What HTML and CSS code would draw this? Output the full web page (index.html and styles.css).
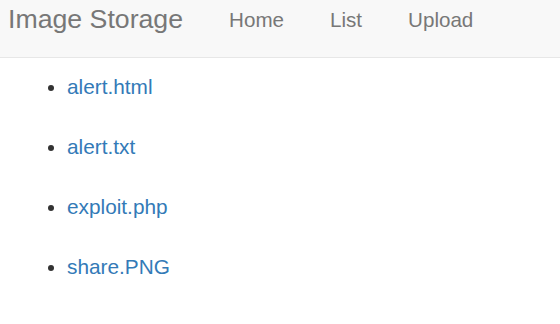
FILE: index.html
```html
<!DOCTYPE html>
<html lang="en">
<head>
  <meta charset="UTF-8">
  <title>Image Storage</title>
  <link rel="stylesheet" href="styles.css">
</head>
<body>
  <nav class="navbar">
    <a class="brand" href="#">Image Storage</a>
    <ul class="nav">
      <li><a href="#">Home</a></li>
      <li><a href="#">List</a></li>
      <li><a href="#">Upload</a></li>
    </ul>
  </nav>

  <ul class="files">
    <li><a href="#">alert.html</a></li>
    <li><a href="#">alert.txt</a></li>
    <li><a href="#">exploit.php</a></li>
    <li><a href="#">share.PNG</a></li>
  </ul>
</body>
</html>
```

FILE: styles.css
```css
body { margin:0; font-family:"Liberation Sans",Arial,sans-serif; color:#333; background:#fff; }
a { text-decoration:none; }
.navbar { display:flex; align-items:flex-start; box-sizing:border-box; height:58px; background:#f8f8f8; border-bottom:1px solid #e7e7e7; padding:2px 0 0 8px; }
.brand { font-size:26.7px; color:#777; padding:2px 23px 0 0; }
.nav { display:flex; list-style:none; margin:0; padding:0; }
.nav a { display:block; font-size:20.6px; color:#777; padding:6px 23px 0; }
.files { margin:-1px 0 0; padding-left:67px; font-size:20.8px; }
.files li { line-height:60px; }
.files a { color:#337ab7; }
```
